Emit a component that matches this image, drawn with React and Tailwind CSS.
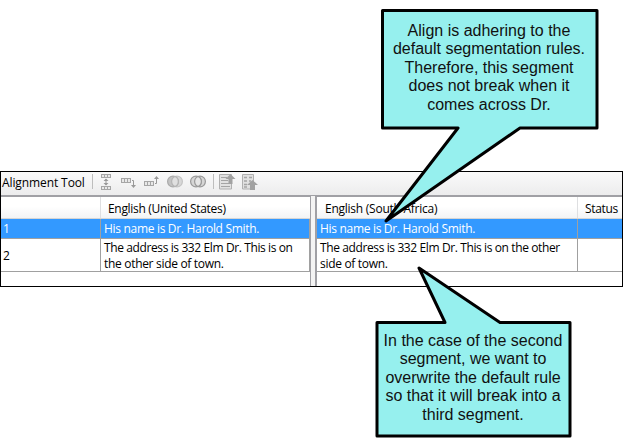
const segoe = "font-['Open_Sans','Noto_Sans',sans-serif]";

function Line({ children, className = "tracking-[-0.31px]" }) {
  return <div className={`h-4 whitespace-nowrap leading-4 ${className}`}>{children}</div>;
}

function Cells({ x, y, h = 4 }) {
  return (
    <g>
      <rect x={x} y={y} width="10" height={h} fill="#a6a6a6" />
      <path d={`M${x + 1} ${y + 1}h2v${h - 2}h-2z M${x + 4} ${y + 1}h2v${h - 2}h-2z M${x + 7} ${y + 1}h2v${h - 2}h-2z`} fill="#e8e8e8" />
    </g>
  );
}

function Circles({ x, strong }) {
  return (
    <g transform={`translate(${x} 0)`} strokeWidth="1.2">
      <circle cx="10" cy="9.5" r="5.400" fill={strong ? "#d6d6d6" : "#d8d8d8"} stroke={strong ? "#999" : "#c4c4c4"} />
      <circle cx="6" cy="9.5" r="5.400" fill={strong ? "#d6d6d6" : "#c4c4c4"} stroke={strong ? "#999" : "#aaa"} />
      <path d="M8 4.500a5.400 5.400 0 0 1 0 10a5.400 5.400 0 0 1 0-10z" fill={strong ? "#e6e6e6" : "#e0e0e0"} stroke={strong ? "#999" : "#b4b4b4"} />
    </g>
  );
}

function Tools() {
  return (
    <svg className="block shrink-0" width="170" height="22" viewBox="91 0 170 22">
      <path d="M92.5 2v15M213.5 2v15" stroke="#bdbdbd" />
      <Cells x={101} y={2} />
      <Cells x={101} y={14} />
      <path d="M106 7v6" stroke="#999" />
      <path d="M103.500 9l2.500-2.500 2.500 2.500zM103.500 11l2.500 2.500 2.500-2.500z" fill="#999" />
      <Cells x={121} y={6} h={5} />
      <path d="M132 8.500h1.500V14" fill="none" stroke="#999" />
      <path d="M131 13h5l-2.500 3z" fill="#999" />
      <Cells x={144} y={9} h={5} />
      <path d="M155 11.500h1.500V6" fill="none" stroke="#999" />
      <path d="M154 7h5l-2.500-3z" fill="#999" />
      <Circles x={167} />
      <Circles x={190} strong />
      <g>
        <path d="M219.500 2.500h12v14.500h-12z" fill="#e1e1e1" stroke="#b0b0b0" />
        <path d="M221 5.500h6M221 8.500h7M221 11.500h9M221 14.500h9" stroke="#a5a5a5" />
        <path d="M230.500 2l5 5h-3v5h-4V7h-3z" fill="#a2a2a2" />
        <path d="M242.500 2.500h11v14.500h-11z" fill="#e1e1e1" stroke="#b0b0b0" />
        <path d="M244 5.500h3M249 5.500h3M244 9h3M249 9h2M244 12.500h3M244 15h3" stroke="#a5a5a5" strokeWidth="1.5" />
        <path d="M252.500 8l5.500 5h-3v5h-5v-5h-3z" fill="#a2a2a2" />
      </g>
    </svg>
  );
}

const header = "flex h-[22px] bg-linear-to-b from-white from-45% to-[#f3f4f5] border-b border-[#d5d5d5] pt-1";

export default function App() {
  return (
    <main className="relative h-[446px] w-[623px] overflow-hidden bg-white pt-[171px]">
      <section className={`flex h-[116px] flex-col border border-black text-[12px] text-black ${segoe}`}>
        <div className="flex h-[23px] shrink-0 bg-linear-to-b from-[#fafafa] to-[#ececed]">
          <div className="w-[90px] pl-px pt-[3px]"><Line className="tracking-[-0.1px]">Alignment Tool</Line></div>
          <Tools />
        </div>
        <div className="flex min-h-0 flex-1 bg-[#f4f4f4]">
          <div className="w-[310px] border-r border-t-2 border-[#a0a0a5] bg-white">
            <div className={header}>
              <div className="-mt-1 w-[100px] border-r border-[#dedfe1]" />
              <div className="pl-[7px]"><Line>English (United States)</Line></div>
            </div>
            <div className="flex h-5 border-b border-r border-[#a0a0a0] bg-[#3399ff] text-white">
              <div className="w-[100px] border-r border-[#a0a0a0] pl-0.5 pt-[2px]"><Line>1</Line></div>
              <div className="pl-[3px] pt-[2px]"><Line>His name is Dr. Harold Smith.</Line></div>
            </div>
            <div className="flex h-[33px] border-b border-r border-[#a0a0a0]">
              <div className="w-[100px] border-r border-[#a0a0a0] pl-0.5 pt-[9px]"><Line>2</Line></div>
              <div className="pl-[3px] pt-px">
                <Line className="tracking-[-0.39px]">The address is 332 Elm Dr. This is on</Line>
                <Line>the other side of town.</Line>
              </div>
            </div>
          </div>
          <div className="w-1 border-t border-[#a0a0a5]" />
          <div className="min-w-0 flex-1 border-l-2 border-t-2 border-[#a0a0a5] bg-white">
            <div className={header}>
              <div className="-mt-1 w-[261px] border-r border-[#dedfe1] pl-2 pt-1"><Line className="tracking-[-0.25px]">English (South Africa)</Line></div>
              <div className="pl-[7px]"><Line>Status</Line></div>
            </div>
            <div className="flex h-5 border-b border-[#a0a0a0] bg-[#3399ff] text-white">
              <div className="w-[261px] border-r border-[#a0a0a0] pl-[3px] pt-[2px]"><Line>His name is Dr. Harold Smith.</Line></div>
            </div>
            <div className="flex h-[33px] border-b border-[#a0a0a0]">
              <div className="w-[261px] border-r border-[#a0a0a0] pl-[3px] pt-px">
                <Line className="tracking-[-0.39px]">The address is 332 Elm Dr. This is on the other</Line>
                <Line>side of town.</Line>
              </div>
            </div>
          </div>
        </div>
      </section>

      <svg className="absolute inset-0" width="623" height="446" fill="#96f0ee" stroke="#000" strokeWidth="3" strokeLinejoin="round">
        <path d="M382.500 10.500H597V128H520L386 221L458 128H382.500Z" />
        <path d="M377 322.500H445L419 268L500 322.500H570V436H377Z" />
      </svg>
      <p className="absolute left-[382px] top-[22px] w-[214px] text-center font-['Liberation_Sans',sans-serif] text-[16px] leading-[18.4px] text-[#111]">
        Align is adhering to the<br />default segmentation rules.<br />Therefore, this segment<br />does not break when it<br />comes across Dr.
      </p>
      <p className="absolute left-[377px] top-[332px] w-[192px] whitespace-nowrap text-center font-['Liberation_Sans',sans-serif] text-[16px] leading-[18.4px] text-[#111]">
        In the case of the second<br />segment, we want to<br />overwrite the default rule<br />so that it will break into a<br />third segment.
      </p>
    </main>
  );
}
